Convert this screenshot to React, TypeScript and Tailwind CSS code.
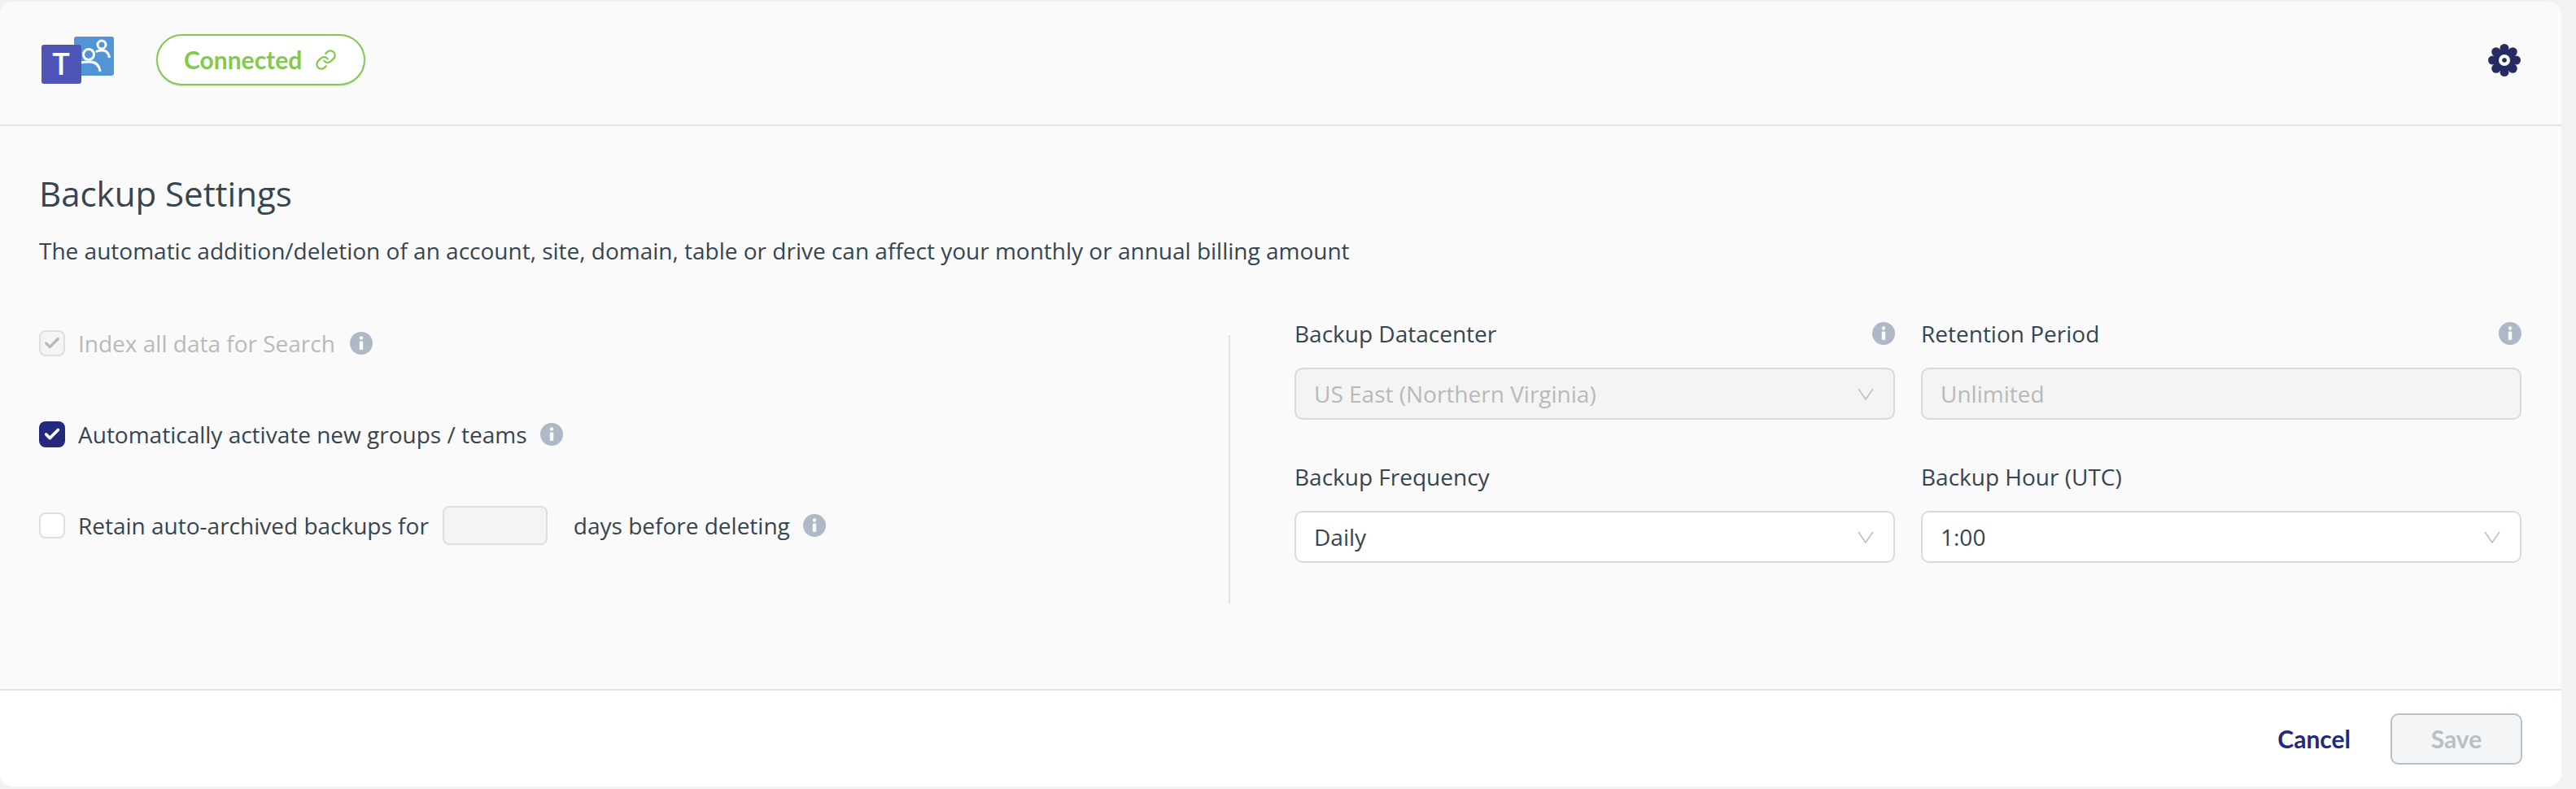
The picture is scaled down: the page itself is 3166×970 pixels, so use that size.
import { Check, Link } from 'lucide-react';

function InfoIcon() {
  return (
    <svg viewBox="0 0 28 28" className="w-[28px] h-[28px] flex-shrink-0">
      <circle cx="14" cy="14" r="14" fill="#aeb8c6" />
      <circle cx="14" cy="7.5" r="2.2" fill="#fafafa" />
      <rect x="11.8" y="11.5" width="4.4" height="10.5" rx="1" fill="#fafafa" />
    </svg>
  );
}

function TeamsLogo() {
  return (
    <svg viewBox="0 0 92 60" className="w-[92px] h-[60px]">
      <rect x="41" y="1" width="49" height="48" rx="3" fill="#5295d6" />
      <g fill="none" stroke="#fff" strokeWidth="3">
        <circle cx="75" cy="11" r="5" />
        <path d="M68 20c2-2 9-3 12-1 3 2 4 4 4.500 8" />
        <circle cx="59" cy="23" r="6.500" />
        <path d="M50 33c3-1 6-1 10-1 7 0 12 4 13 12" />
      </g>
      <rect x="1" y="11" width="49" height="48" rx="3" fill="#4f55b7" />
      <text x="25" y="47.500" textAnchor="middle" fill="#fff" className="font-['Open_Sans',sans-serif] text-[38px] font-semibold">
        T
      </text>
    </svg>
  );
}

function GearIcon() {
  const lobes = [0, 45, 90, 135, 180, 225, 270, 315];
  return (
    <svg viewBox="0 0 40 40" className="w-[40px] h-[40px]">
      <circle cx="20" cy="20" r="14" fill="#262b61" />
      {lobes.map((deg) => (
        <circle
          key={deg}
          cx={20 + 14.5 * Math.cos((deg * Math.PI) / 180)}
          cy={20 + 14.5 * Math.sin((deg * Math.PI) / 180)}
          r="5.500"
          fill="#262b61"
        />
      ))}
      <circle cx="20" cy="20" r="7" fill="#fafafa" />
      <circle cx="20" cy="20" r="2.800" fill="#262b61" />
    </svg>
  );
}

function Chevron() {
  return (
    <svg viewBox="0 0 20 15" className="w-[20px] h-[15px]" fill="none" stroke="#b9bfc4" strokeWidth="1.500">
      <path d="M1 1l9 13 9-13" />
    </svg>
  );
}

function Field({ label, value, info, disabled, select }: { label: string; value: string; info?: boolean; disabled?: boolean; select?: boolean }) {
  return (
    <div>
      <div className="flex items-center justify-between h-[32px] mb-[26px]">
        <span className="text-[28px] leading-[32px] text-[#36454f]">{label}</span>
        {info && <InfoIcon />}
      </div>
      <div
        className={`flex items-center justify-between h-[64px] pl-[22px] pr-[24px] border-2 border-[#dadada] rounded-[10px] text-[28px] ${
          disabled ? 'bg-[#f4f4f4] text-[#b9b9b9]' : 'bg-white text-[#36454f]'
        }`}
      >
        <span>{value}</span>
        {select && <Chevron />}
      </div>
    </div>
  );
}

export default function App() {
  return (
    <div className="w-[3166px] h-[970px] bg-[#f1f3f3] pt-[2px] font-['Open_Sans',sans-serif] overflow-hidden">
      <div className="w-[3148px] h-[965px] flex flex-col bg-[#fafafa] rounded-[16px] overflow-hidden">
        {/* Header */}
        <div className="h-[153px] flex-shrink-0 flex items-center justify-between pl-[50px] pr-[50px] pb-[8px] border-b-2 border-[#dfe3e8]">
          <div className="flex items-center">
            <TeamsLogo />
            <div className="ml-[50px] w-[257px] h-[63px] flex items-center pl-[32px] gap-[16px] bg-white border-2 border-[#82c94e] rounded-full shadow-sm">
              <span className="font-['Lato',sans-serif] font-bold text-[30px] text-[#82c94e]">Connected</span>
              <Link className="w-[27px] h-[27px] text-[#82c94e]" strokeWidth={2} />
            </div>
          </div>
          <GearIcon />
        </div>

        {/* Settings */}
        <div className="flex-1 pl-[48px] pr-[49px] pt-[56px]">
          <h1 className="text-[42px] leading-[54px] text-[#36454f]">Backup Settings</h1>
          <p className="mt-[24px] text-[28px] leading-[38px] text-[#36454f]">
            The automatic addition/deletion of an account, site, domain, table or drive can affect your monthly or annual billing amount
          </p>

          <div className="flex mt-[67px]">
            <div className="w-[1462px] flex-shrink-0 flex flex-col gap-[64px] pt-[4px]">
              <div className="flex items-center h-[48px]">
                <span className="w-[32px] h-[32px] flex items-center justify-center border-2 border-[#dedede] rounded-[8px] bg-[#f4f4f4]">
                  <Check className="w-[22px] h-[22px] text-[#b9b9b9]" strokeWidth={3.500} />
                </span>
                <span className="ml-[16px] text-[28px] text-[#b9b9b9]">Index all data for Search</span>
                <span className="ml-[18px]"><InfoIcon /></span>
              </div>
              <div className="flex items-center h-[48px]">
                <span className="w-[32px] h-[32px] flex items-center justify-center rounded-[8px] bg-[#232a7c]">
                  <Check className="w-[22px] h-[22px] text-white" strokeWidth={4} />
                </span>
                <span className="ml-[16px] text-[28px] text-[#36454f]">Automatically activate new groups / teams</span>
                <span className="ml-[16px]"><InfoIcon /></span>
              </div>
              <div className="flex items-center h-[48px]">
                <span className="w-[32px] h-[32px] border-2 border-[#dedede] rounded-[8px] bg-white" />
                <span className="ml-[16px] text-[28px] text-[#36454f]">Retain auto-archived backups for</span>
                <span className="ml-[17px] w-[129px] h-[48px] border-2 border-[#dedede] rounded-[8px] bg-[#f4f4f4]" />
                <span className="ml-[32px] text-[28px] text-[#36454f]">days before deleting</span>
                <span className="ml-[16px]"><InfoIcon /></span>
              </div>
            </div>

            <div className="w-[2px] h-[330px] mt-[18px] bg-[#dfe3e8] flex-shrink-0" />

            <div className="ml-[79px] flex-1 grid grid-cols-2 gap-x-[32px] gap-y-[54px] content-start">
              <Field label="Backup Datacenter" value="US East (Northern Virginia)" info disabled select />
              <Field label="Retention Period" value="Unlimited" info disabled />
              <Field label="Backup Frequency" value="Daily" select />
              <Field label="Backup Hour (UTC)" value="1:00" select />
            </div>
          </div>
        </div>

        {/* Footer */}
        <div className="h-[120px] flex-shrink-0 flex items-center justify-end pr-[48px] bg-white border-t-2 border-[#dfe3e8]">
          <button className="font-['Lato',sans-serif] font-bold text-[30px] text-[#232a7c]">Cancel</button>
          <button className="ml-[49px] w-[162px] h-[63px] font-['Lato',sans-serif] font-bold text-[30px] text-[#b8c0c5] bg-[#f4f5f7] border-2 border-[#b8c0c5] rounded-[10px]">
            Save
          </button>
        </div>
      </div>
    </div>
  );
}
